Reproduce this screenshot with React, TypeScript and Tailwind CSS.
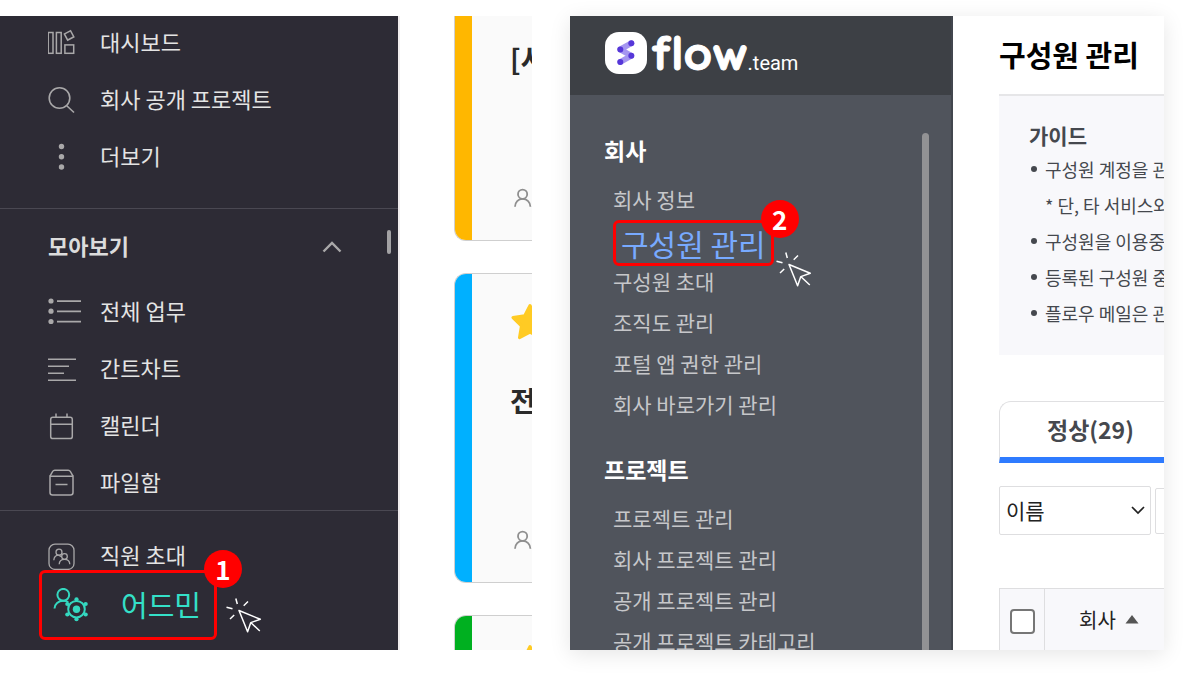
import { ReactNode } from "react";

const SIDE_ICON = "shrink-0 text-[#a9a8a9]";

const DashboardIcon = () => (
  <svg className={SIDE_ICON} width="28" height="28" viewBox="0 0 28 28" fill="none" stroke="currentColor" strokeWidth="1.5">
    <rect x="0.2" y="3.5" width="4.8" height="20.8" />
    <rect x="8.4" y="3.5" width="4.8" height="20.8" />
    <rect x="16.9" y="15.9" width="8.8" height="8.4" />
    <rect x="17.6" y="2.9" width="7" height="7" transform="rotate(-28 21.1 6.4)" />
  </svg>
);

const SearchIcon = () => (
  <svg className={SIDE_ICON} width="28" height="28" viewBox="0 0 28 28" fill="none" stroke="currentColor" strokeWidth="1.6">
    <circle cx="11.5" cy="12" r="10.3" />
    <path d="M18.5 19.5L26 26.5" />
  </svg>
);

const MoreIcon = () => (
  <svg className={SIDE_ICON} width="28" height="28" viewBox="0 0 28 28" fill="currentColor">
    <circle cx="13.5" cy="3.5" r="2.7" />
    <circle cx="13.5" cy="13.7" r="2.7" />
    <circle cx="13.5" cy="24" r="2.7" />
  </svg>
);

const ListIcon = () => (
  <svg className={SIDE_ICON} width="34" height="28" viewBox="0 0 34 28" fill="currentColor">
    <circle cx="3" cy="3" r="2.6" />
    <circle cx="3" cy="13.2" r="2.6" />
    <circle cx="3" cy="23.5" r="2.6" />
    <path d="M9 3.2H33M9 13.4H33M9 23.7H33" stroke="currentColor" strokeWidth="1.8" />
  </svg>
);

const GanttIcon = () => (
  <svg className={SIDE_ICON} width="28" height="28" viewBox="0 0 28 28" stroke="currentColor" strokeWidth="1.6">
    <path d="M0 4.3H28M0 11.2H21M0 18.3H16M0 25.2H28" />
  </svg>
);

const CalendarIcon = () => (
  <svg className={SIDE_ICON} width="28" height="28" viewBox="0 0 28 28" fill="none" stroke="currentColor" strokeWidth="1.5">
    <rect x="2.7" y="5.2" width="21.6" height="21.4" rx="2.2" />
    <path d="M2.7 12.2H24.3M8 1.5V5.2M19 1.5V5.2" />
  </svg>
);

const ArchiveIcon = () => (
  <svg className={SIDE_ICON} width="28" height="28" viewBox="0 0 28 28" fill="none" stroke="currentColor" strokeWidth="1.5">
    <path d="M2 7.2L4.6 2.5Q5.3 1.2 6.8 1.2H20.2Q21.7 1.2 22.4 2.5L25 7.2" />
    <path d="M2 7.2H25V23.5Q25 26 22.5 26H4.5Q2 26 2 23.5ZM7.5 15.5H19.5" />
  </svg>
);

const InviteIcon = () => (
  <svg className={SIDE_ICON} width="28" height="28" viewBox="0 0 28 28" fill="none" stroke="currentColor" strokeWidth="1.3">
    <rect x="1" y="2.2" width="25" height="25.2" rx="6" />
    <circle cx="11" cy="10.2" r="3" />
    <path d="M5.8 18.2Q6.2 13.4 10.6 13.2" />
    <circle cx="16.5" cy="14.5" r="2.8" />
    <path d="M11.2 22.3Q11.4 17.4 16.5 17.4T21.8 22.3M10.6 13.3L13.8 15" />
  </svg>
);

const AdminIcon = () => (
  <svg className="shrink-0" width="36" height="34" viewBox="0 0 36 34" fill="none" stroke="#34d8c0" strokeWidth="2">
    <circle cx="10.3" cy="6.8" r="5.9" />
    <path d="M1.5 20.6C1.5 16 5.5 12.8 10.3 12.8C12.5 12.8 14 13.3 15.3 14.2" />
    <circle cx="23.5" cy="21.2" r="8.3" />
    <circle cx="23.5" cy="21.2" r="3.7" fill="#34d8c0" stroke="none" />
    <g fill="#34d8c0" stroke="none">
      <circle cx="23.5" cy="11.3" r="2.1" />
      <circle cx="32.7" cy="16" r="2.1" />
      <circle cx="32.7" cy="26.5" r="2.1" />
      <circle cx="23.5" cy="31.2" r="2.1" />
      <circle cx="14.3" cy="26.5" r="2.1" />
      <circle cx="14.3" cy="16" r="2.1" />
    </g>
  </svg>
);

const PersonIcon = () => (
  <svg className="shrink-0" width="20" height="20" viewBox="0 0 20 20" fill="none" stroke="#8f8f8f" strokeWidth="1.8">
    <circle cx="8.6" cy="6.2" r="4.6" />
    <path d="M1 18.8C1 14 4.3 10.9 8.6 10.9S16.4 14 16.4 18.8" />
  </svg>
);

const StarIcon = () => (
  <svg className="shrink-0" width="40" height="38" viewBox="0 0 40 38" fill="#ffcb24" stroke="#ffcb24" strokeWidth="3" strokeLinejoin="round">
    <path d="M20 2.5L25.3 12.8L37 14.6L28.6 22.9L30.5 34.6L20 29.2L9.5 34.6L11.4 22.9L3 14.6L14.7 12.8Z" />
  </svg>
);

const ClickCursor = () => (
  <svg width="36" height="36" viewBox="0 0 36 36" fill="none" stroke="#fff" strokeWidth="1.5" strokeLinejoin="round">
    <path d="M13 12.5L34.3 21.3L24.8 24.6L21.6 33.8Z" />
    <path d="M25 24.8L33.8 33M0.5 9.2L6.5 10.8M9.8 0.5L11.3 6M22 3.5L17.7 7.7M4 21L8.2 17" />
  </svg>
);

const StepBadge = ({ step }: { step: number }) => (
  <span className="flex size-[38px] items-center justify-center rounded-full bg-[#ff0000] text-[26px] leading-none font-bold text-white">
    {step}
  </span>
);

const FlowLogo = () => (
  <svg width="42" height="42" viewBox="0 0 42 42">
    <rect width="42" height="42" rx="14" fill="#fff" />
    <path
      d="M26.3 11.2L15.3 17.4L26.3 23.8L15.3 30"
      stroke="#a596f0"
      strokeWidth="5.8"
      strokeLinecap="round"
      strokeLinejoin="round"
      fill="none"
    />
    <g fill="#5637d8">
      <circle cx="26.3" cy="11.2" r="3" />
      <circle cx="15.3" cy="17.4" r="3" />
      <circle cx="26.3" cy="23.8" r="3" />
      <circle cx="15.3" cy="30" r="3" />
    </g>
  </svg>
);

type SideItemProps = { icon: ReactNode; label: string };

const SideItem = ({ icon, label }: SideItemProps) => (
  <li>
    <a href="#" className="flex h-7 items-center text-[22px] text-[#e4e4e4]">
      <span className="w-[52px] shrink-0">{icon}</span>
      <span className="pb-[3px]">{label}</span>
    </a>
  </li>
);

const mainMenu: SideItemProps[] = [
  { icon: <DashboardIcon />, label: "대시보드" },
  { icon: <SearchIcon />, label: "회사 공개 프로젝트" },
  { icon: <MoreIcon />, label: "더보기" },
];

const collectMenu: SideItemProps[] = [
  { icon: <ListIcon />, label: "전체 업무" },
  { icon: <GanttIcon />, label: "간트차트" },
  { icon: <CalendarIcon />, label: "캘린더" },
  { icon: <ArchiveIcon />, label: "파일함" },
];

const Sidebar = () => (
  <nav className="w-[398px] shrink-0 bg-[#2d2b35]">
    <ul className="flex flex-col gap-[29px] px-12 pt-[13px] pb-[37px]">
      {mainMenu.map((item) => (
        <SideItem key={item.label} {...item} />
      ))}
    </ul>

    <div className="relative border-t border-[#4a4852] px-12 pt-6 pb-[13px]">
      <button
        type="button"
        className="flex h-7 w-full items-center justify-between pr-2 text-[22px] font-bold text-[#dcdcdc]"
      >
        <span className="pb-[3px]">모아보기</span>
        <svg width="20" height="12" viewBox="0 0 20 12" fill="none" stroke="#a9a8a9" strokeWidth="2.4">
          <path d="M1.5 10.5L10 2L18.5 10.5" />
        </svg>
      </button>
      <span className="absolute top-[21px] right-[7px] h-6 w-1 rounded-full bg-[#a3a2a4]" />
      <ul className="mt-[37px] flex flex-col gap-[29px]">
        {collectMenu.map((item) => (
          <SideItem key={item.label} {...item} />
        ))}
      </ul>
    </div>

    <div className="border-t border-[#4a4852] pt-[31px] pb-[10px]">
      <ul className="px-12">
        <SideItem icon={<InviteIcon />} label="직원 초대" />
      </ul>
      <div className="relative ml-[39px] h-[70px] w-[178px]">
        <a
          href="#"
          className="flex h-full items-center gap-8 rounded-md border-3 border-[#ff0000] pl-[11px] text-[29px] text-[#34e0c8]"
        >
          <AdminIcon />
          어드민
        </a>
        <div className="absolute -top-5 -right-[25px]">
          <StepBadge step={1} />
        </div>
        <div className="absolute top-7 -right-[45px]">
          <ClickCursor />
        </div>
      </div>
    </div>
  </nav>
);

const ProjectCards = () => (
  <section className="flex min-w-0 flex-1 flex-col gap-8 overflow-hidden border-l-2 border-[#f1edee] pl-[54px] whitespace-nowrap">
    <article className="flex h-[225px] shrink-0 overflow-hidden rounded-bl-xl border-b border-l border-[#cfcfcf] bg-[#fafafa]">
      <div className="w-[17px] shrink-0 bg-[#ffb700]" />
      <div className="flex flex-col justify-end pb-8 pl-[38px]">
        <h3 className="mb-[110px] text-[28px] leading-10 font-bold text-[#2a2a2a]">[서</h3>
        <span className="pl-1">
          <PersonIcon />
        </span>
      </div>
    </article>

    <article className="flex h-[310px] shrink-0 overflow-hidden rounded-l-xl border-y border-l border-[#cfcfcf] bg-[#fafafa]">
      <div className="w-[17px] shrink-0 bg-[#00b0ff]" />
      <div className="flex flex-col justify-end pb-8 pl-[38px]">
        <span className="mb-[39px]">
          <StarIcon />
        </span>
        <h3 className="mb-[110px] text-[28px] leading-10 font-bold text-[#2a2a2a]">전</h3>
        <span className="pl-1">
          <PersonIcon />
        </span>
      </div>
    </article>

    <article className="flex h-[310px] shrink-0 overflow-hidden rounded-l-xl border-y border-l border-[#cfcfcf] bg-[#fafafa]">
      <div className="w-[17px] shrink-0 bg-[#00b020]" />
      <div className="pt-[28px] pl-[38px]">
        <StarIcon />
      </div>
    </article>
  </section>
);

const AdminLink = ({ label }: { label: string }) => (
  <li>
    <a href="#" className="flex h-[41px] items-center">
      {label}
    </a>
  </li>
);

const AdminSidebar = () => (
  <nav className="flex w-[383px] shrink-0 flex-col border-r-2 border-[#42464e] bg-[#50545c]">
    <div className="flex h-[79px] shrink-0 items-center bg-[#3d4045] pb-[5px] pl-[35px] text-white">
      <FlowLogo />
      <span className="flex items-baseline pl-1">
        <span className="font-['Quicksand','Noto_Sans_CJK_KR',sans-serif] text-[46px] leading-none font-bold [-webkit-text-stroke:1px_#fff]">
          flow
        </span>
        <span className="font-[Roboto,sans-serif] text-xl leading-none">.team</span>
      </span>
    </div>

    <div className="flex min-h-0 flex-1">
      <div className="flex-1 overflow-hidden pt-[35px] pl-[34px] text-[21px] whitespace-nowrap text-[#c6c7ca]">
        <h2 className="h-[41px] text-[23px] leading-[41px] font-bold text-white">회사</h2>
        <ul className="mt-2 pl-[9px]">
          <AdminLink label="회사 정보" />
          <li className="flex h-[41px] items-start">
            <div className="relative">
              <a
                href="#"
                className="flex h-[46px] items-center rounded-md border-3 border-[#ff0000] px-[5px] text-[30px] leading-none text-[#78aaff]"
              >
                구성원 관리
              </a>
              <div className="absolute -top-5 -right-[25px]">
                <StepBadge step={2} />
              </div>
              <div className="absolute top-8 -right-[38px]">
                <ClickCursor />
              </div>
            </div>
          </li>
          <AdminLink label="구성원 초대" />
          <AdminLink label="조직도 관리" />
          <AdminLink label="포털 앱 권한 관리" />
          <AdminLink label="회사 바로가기 관리" />
        </ul>

        <h2 className="mt-6 h-[41px] text-[23px] leading-[41px] font-bold text-white">프로젝트</h2>
        <ul className="mt-2 pl-[9px]">
          <AdminLink label="프로젝트 관리" />
          <AdminLink label="회사 프로젝트 관리" />
          <AdminLink label="공개 프로젝트 관리" />
          <AdminLink label="공개 프로젝트 카테고리" />
        </ul>
      </div>
      <div className="mt-[38px] mr-[22px] w-[7px] shrink-0 rounded-t-full bg-[#929294]" />
    </div>
  </nav>
);

const guideLines = [
  { text: "구성원 계정을 관", note: false },
  { text: "* 단, 타 서비스와", note: true },
  { text: "구성원을 이용중", note: false },
  { text: "등록된 구성원 중", note: false },
  { text: "플로우 메일은 관", note: false },
];

const MemberContent = () => (
  <main className="min-w-0 flex-1 overflow-hidden bg-white pl-[46px] whitespace-nowrap">
    <h1 className="h-[78px] text-[29px] leading-[76px] font-bold text-black">구성원 관리</h1>

    <section className="h-[261px] border-t-2 border-[#e6e6e8] bg-[#f8f8fb] pt-[23px] pl-[30px] text-[#45484e]">
      <h2 className="text-[21px] leading-8 font-bold">가이드</h2>
      <ul className="text-lg leading-[36px]">
        {guideLines.map(({ text, note }) => (
          <li key={text} className="flex items-center">
            <span className="w-4 shrink-0 pl-[2px]">
              {!note && <span className="block size-[6px] rounded-full bg-[#45484e]" />}
            </span>
            {text}
          </li>
        ))}
      </ul>
    </section>

    <div className="mt-[46px]">
      <button
        type="button"
        className="flex h-[62px] w-[260px] items-center rounded-tl-xl border-t border-b-6 border-l border-t-[#e0e0e2] border-b-[#2e7bff] border-l-[#e0e0e2] pl-[47px] text-[23px] font-bold text-[#45484e]"
      >
        정상(29)
      </button>
    </div>

    <div className="mt-[23px] flex items-center gap-1">
      <div className="relative shrink-0">
        <select
          aria-label="검색 조건"
          className="block h-[49px] w-[152px] appearance-none rounded-xs border border-[#dedee0] bg-white pl-[6px] text-[21px] text-[#222]"
        >
          <option>이름</option>
        </select>
        <svg
          className="pointer-events-none absolute top-5 right-[6px]"
          width="14"
          height="9"
          viewBox="0 0 14 9"
          fill="none"
          stroke="#222"
          strokeWidth="1.7"
        >
          <path d="M1 1L7 7L13 1" />
        </svg>
      </div>
      <input
        type="text"
        aria-label="검색어"
        className="h-[46px] w-[300px] shrink-0 rounded-xs border border-[#dedee0] bg-white px-2"
      />
    </div>

    <table className="mt-[53px] w-[400px] table-fixed border-collapse text-xl text-[#222]">
      <thead>
        <tr className="h-[62px] bg-[#f8f8fb]">
          <th className="w-[45px] border border-[#dedee0] p-0">
            <input
              type="checkbox"
              aria-label="전체 선택"
              className="mx-auto mt-1 block size-[25px] appearance-none rounded-[4px] border-2 border-[#767676] bg-white"
            />
          </th>
          <th className="border border-[#dedee0] p-0 pl-[34px] text-left font-normal">
            <span className="flex items-center gap-[9px]">
              회사
              <svg width="14" height="9" viewBox="0 0 14 9" fill="#555">
                <path d="M7 0L13.5 8.5H0.5Z" />
              </svg>
            </span>
          </th>
        </tr>
      </thead>
    </table>
  </main>
);

export default function App() {
  return (
    <div className="flex h-screen gap-[38px] overflow-hidden bg-white pt-4 pr-5 pb-6 font-['Noto_Sans_CJK_KR',sans-serif]">
      <div className="flex w-[532px] shrink-0 overflow-hidden">
        <Sidebar />
        <ProjectCards />
      </div>
      <div className="flex min-w-0 flex-1 shadow-[0_4px_20px_rgba(0,0,0,0.1)]">
        <AdminSidebar />
        <MemberContent />
      </div>
    </div>
  );
}
